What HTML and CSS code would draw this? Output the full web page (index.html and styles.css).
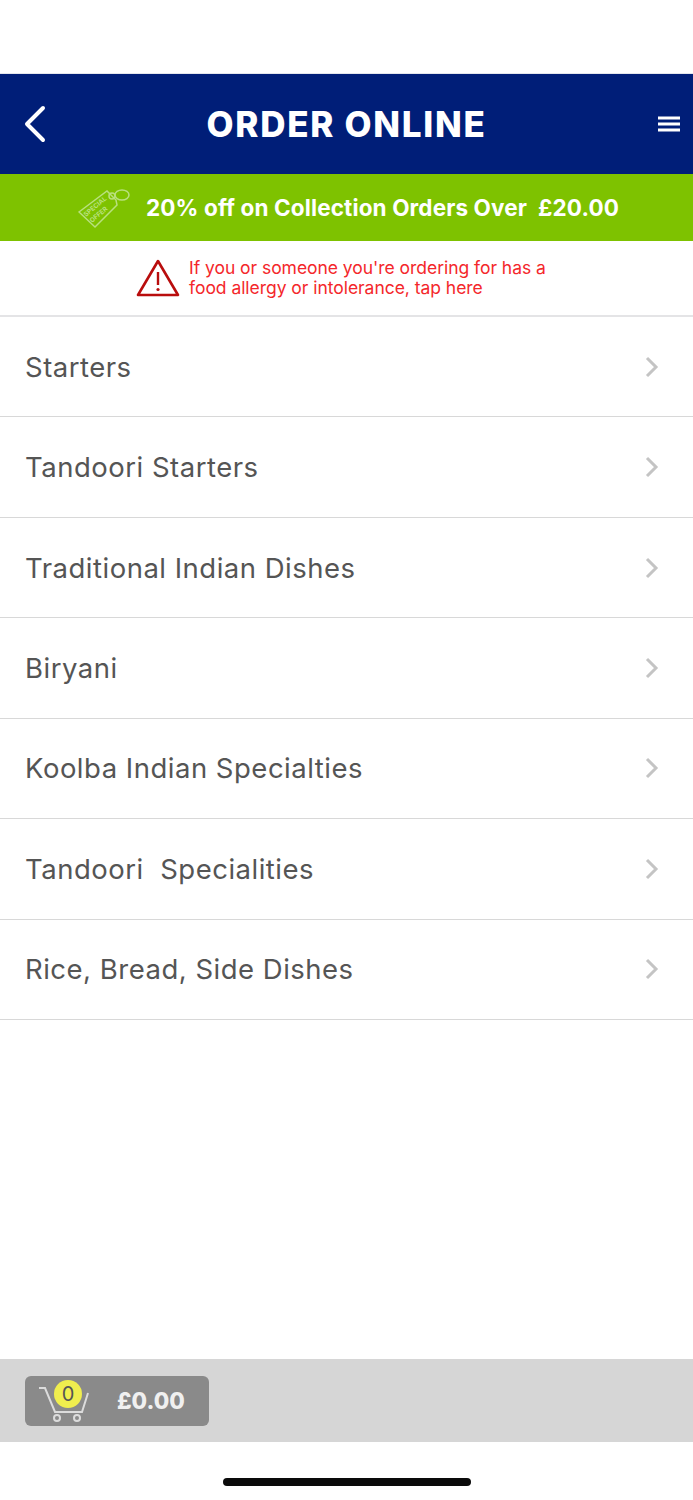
FILE: index.html
```html
<!DOCTYPE html>
<html lang="en">
<head>
    <meta charset="UTF-8">
    <meta name="viewport" content="width=device-width, initial-scale=1.0">
    <title>Order Online</title>
    <link rel="stylesheet" href="styles.css">
</head>
<body>
    <div class="page">
        <div class="status-space"></div>

        <header class="top-bar">
            <svg class="back-icon" width="24" height="38" viewBox="0 0 24 38">
                <path d="M21 3 L5 19 L21 35" fill="none" stroke="#fff" stroke-width="4" stroke-linecap="round" stroke-linejoin="round"/>
            </svg>
            <h1>ORDER ONLINE</h1>
            <svg class="menu-icon" width="22" height="16" viewBox="0 0 22 16">
                <path d="M0 2 H22 M0 8 H22 M0 14 H22" stroke="#fff" stroke-width="2.800"/>
            </svg>
        </header>

        <div class="offer-bar">
            <svg class="tag-icon" width="52" height="42" viewBox="0 0 52 42">
                <g fill="none" stroke="#b9e07e" stroke-width="1.500">
                    <path d="M1 25 L29 4 L38 13 L39 18 L17 40 Z"/>
                    <circle cx="34" cy="9" r="3"/>
                    <ellipse cx="44" cy="8" rx="7" ry="5"/>
                </g>
                <text class="tag-text" transform="translate(8 30) rotate(-40)">SPECIAL</text>
                <text class="tag-text" transform="translate(14 36) rotate(-40)">OFFER</text>
            </svg>
            <span class="offer-text">20% off on Collection Orders Over&nbsp; £20.00</span>
        </div>

        <div class="allergy">
            <svg class="warn-icon" width="44" height="40" viewBox="0 0 44 40">
                <path d="M22 3 L42 37 H2 Z" fill="none" stroke="#b90d0d" stroke-width="2.600" stroke-linejoin="round"/>
                <path d="M22 14 V27" stroke="#b90d0d" stroke-width="2.400"/>
                <circle cx="22" cy="31.500" r="1.600" fill="#b90d0d"/>
            </svg>
            <p>If you or someone you're ordering for has a<br>food allergy or intolerance, tap here</p>
        </div>

        <ul class="menu-list">
            <li>Starters<svg width="14" height="22" viewBox="0 0 14 22"><path d="M2 2 L11 11 L2 20" fill="none" stroke="#c4c4c4" stroke-width="3"/></svg></li>
            <li>Tandoori Starters<svg width="14" height="22" viewBox="0 0 14 22"><path d="M2 2 L11 11 L2 20" fill="none" stroke="#c4c4c4" stroke-width="3"/></svg></li>
            <li>Traditional Indian Dishes<svg width="14" height="22" viewBox="0 0 14 22"><path d="M2 2 L11 11 L2 20" fill="none" stroke="#c4c4c4" stroke-width="3"/></svg></li>
            <li>Biryani<svg width="14" height="22" viewBox="0 0 14 22"><path d="M2 2 L11 11 L2 20" fill="none" stroke="#c4c4c4" stroke-width="3"/></svg></li>
            <li>Koolba Indian Specialties<svg width="14" height="22" viewBox="0 0 14 22"><path d="M2 2 L11 11 L2 20" fill="none" stroke="#c4c4c4" stroke-width="3"/></svg></li>
            <li>Tandoori&nbsp; Specialities<svg width="14" height="22" viewBox="0 0 14 22"><path d="M2 2 L11 11 L2 20" fill="none" stroke="#c4c4c4" stroke-width="3"/></svg></li>
            <li>Rice, Bread, Side Dishes<svg width="14" height="22" viewBox="0 0 14 22"><path d="M2 2 L11 11 L2 20" fill="none" stroke="#c4c4c4" stroke-width="3"/></svg></li>
        </ul>

        <footer class="cart-bar">
            <div class="cart-btn">
                <div class="cart-icon">
                    <svg width="52" height="42" viewBox="0 0 52 42">
                        <g fill="none" stroke="#dcdcdc" stroke-width="2">
                            <path d="M1 8 H7 L17 32 H44 L50 13"/>
                            <circle cx="19" cy="38" r="3"/>
                            <circle cx="39" cy="38" r="3"/>
                        </g>
                    </svg>
                    <span class="cart-count">0</span>
                </div>
                <span class="cart-total">£0.00</span>
            </div>
        </footer>

        <div class="home-area"><span class="home-bar"></span></div>
    </div>
</body>
</html>
```

FILE: styles.css
```css
body {
    margin: 0;
    background: #fff;
    font-family: 'Inter', 'Open Sans', sans-serif;
}
.page {
    display: flex;
    flex-direction: column;
    height: 1500px;
    overflow: hidden;
}
.status-space {
    height: 73px;
    border-bottom: 1px solid #e4e6ec;
}
.top-bar {
    height: 100px;
    background: #001e78;
    display: flex;
    align-items: center;
    justify-content: space-between;
    padding: 0 13px 0 22px;
    position: relative;
    flex-shrink: 0;
}
.top-bar h1 {
    margin: 0;
    color: #fff;
    font-size: 35px;
    font-weight: 800;
    letter-spacing: 1.700px;
    position: absolute;
    left: 0;
    right: 0;
    text-align: center;
}
.offer-bar {
    height: 67px;
    background: #7ec200;
    display: flex;
    align-items: center;
    padding-left: 78px;
    gap: 16px;
    flex-shrink: 0;
}
.tag-text {
    font-size: 6.500px;
    font-weight: 700;
    fill: #b9e07e;
}
.offer-text {
    color: #fff;
    font-size: 22.500px;
    font-weight: 700;
    letter-spacing: 0.120px;
    white-space: nowrap;
}
.allergy {
    height: 74px;
    display: flex;
    align-items: center;
    padding-left: 136px;
    gap: 9px;
    border-bottom: 2px solid #e4e4e6;
    flex-shrink: 0;
}
.allergy p {
    margin: 0;
    color: #f4272b;
    font-size: 17.500px;
    letter-spacing: -0.040px;
    line-height: 20px;
    white-space: nowrap;
}
.menu-list {
    list-style: none;
    margin: 0;
    padding: 0;
    flex: 1;
}
.menu-list li {
    height: 100.430px;
    box-sizing: border-box;
    border-bottom: 1px solid #d8d8d8;
    display: flex;
    align-items: center;
    justify-content: space-between;
    padding: 0 34px 0 25px;
    color: #555;
    font-size: 27.500px;
    letter-spacing: 0.500px;
}
.cart-bar {
    height: 83px;
    background: #d6d6d6;
    display: flex;
    align-items: center;
    padding-left: 25px;
    flex-shrink: 0;
}
.cart-btn {
    width: 184px;
    height: 50px;
    background: #8a8a8a;
    border-radius: 6px;
    display: flex;
    align-items: center;
    padding-left: 13px;
    box-sizing: border-box;
}
.cart-icon {
    position: relative;
    width: 52px;
    height: 42px;
    margin-right: 27px;
}
.cart-count {
    position: absolute;
    left: 16px;
    top: 0;
    width: 28px;
    height: 28px;
    border-radius: 50%;
    background: #f0ee4e;
    color: #555;
    font-size: 20px;
    line-height: 28px;
    text-align: center;
}
.cart-total {
    color: #f0f0f0;
    font-size: 22.500px;
    font-weight: 800;
}
.home-area {
    height: 58px;
    position: relative;
    flex-shrink: 0;
    display: flex;
    justify-content: center;
    padding-top: 36px;
    box-sizing: border-box;
}
.home-bar {
    width: 248px;
    height: 8px;
    border-radius: 4px;
    background: #0a0a0a;
}
```
